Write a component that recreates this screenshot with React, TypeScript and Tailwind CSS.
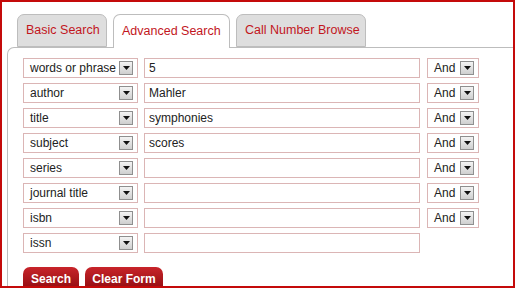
import React from 'react';

const rows = [
  { field: 'words or phrase', value: '5', op: true },
  { field: 'author', value: 'Mahler', op: true },
  { field: 'title', value: 'symphonies', op: true },
  { field: 'subject', value: 'scores', op: true },
  { field: 'series', value: '', op: true },
  { field: 'journal title', value: '', op: true },
  { field: 'isbn', value: '', op: true },
  { field: 'issn', value: '', op: false },
];

function DropButton() {
  return (
    <div className="w-[14px] h-[14px] border border-[#8f8f8f] bg-gradient-to-b from-[#f4f4f4] to-[#cfcfcf] flex items-center justify-center">
      <svg width="7" height="4" viewBox="0 0 7 4">
        <path d="M0 0h7L3.5 4z" fill="#111" />
      </svg>
    </div>
  );
}

function Select({ label, width }: { label: string; width: string }) {
  return (
    <div className={`${width} h-[20px] border border-[#dbb5b5] bg-white flex items-center justify-between pl-[6px] pr-[4px]`}>
      <span className="text-[12px] text-[#222] leading-none">{label}</span>
      <DropButton />
    </div>
  );
}

export default function App() {
  return (
    <div className="w-[515px] h-[288px] border-2 border-[#c40a0a] bg-white overflow-hidden" style={{ fontFamily: '"Liberation Sans", Arial, sans-serif' }}>
      {/* Tabs */}
      <div className="flex gap-[6px] pl-[15px] pt-[12px] relative z-10">
        <div className="w-[90px] h-[33px] border border-[#bdbdbd] bg-[#dedede] rounded-t-[7px] flex items-center pl-[8px] text-[12.5px] text-[#c2161d]">Basic Search</div>
        <div className="w-[117px] h-[34px] border border-b-0 border-[#bdbdbd] bg-white rounded-t-[7px] flex items-center pl-[8px] pb-px text-[12.5px] text-[#c2161d]">Advanced Search</div>
        <div className="w-[130px] h-[33px] border border-[#bdbdbd] bg-[#dedede] rounded-t-[7px] flex items-center pl-[8px] text-[12.5px] text-[#c2161d]">Call Number Browse</div>
      </div>

      {/* Panel */}
      <div className="-mt-px ml-[5px] h-[260px] border-l border-t border-[#bdbdbd] rounded-tl-[7px] pl-[15px] pt-[10px]">
        <div className="flex flex-col gap-[5px]">
          {rows.map((r) => (
            <div key={r.field} className="flex items-center">
              <Select label={r.field} width="w-[115px]" />
              <div className="ml-[6px] w-[276px] h-[20px] border border-[#dbb5b5] bg-white flex items-center pl-[4px] text-[12px] text-[#222]">{r.value}</div>
              {r.op && <div className="ml-[7px]"><Select label="And" width="w-[52px]" /></div>}
            </div>
          ))}
        </div>

        <div className="flex gap-[6px] mt-[14px]">
          <div className="w-[56px] h-[24px] rounded-t-[7px] bg-gradient-to-b from-[#c8242a] to-[#8e0a0e] flex items-start justify-center pt-[3px] text-[12px] font-bold text-white">Search</div>
          <div className="w-[78px] h-[24px] rounded-t-[7px] bg-gradient-to-b from-[#c8242a] to-[#8e0a0e] flex items-start justify-center pt-[3px] text-[12px] font-bold text-white">Clear Form</div>
        </div>
      </div>
    </div>
  );
}
